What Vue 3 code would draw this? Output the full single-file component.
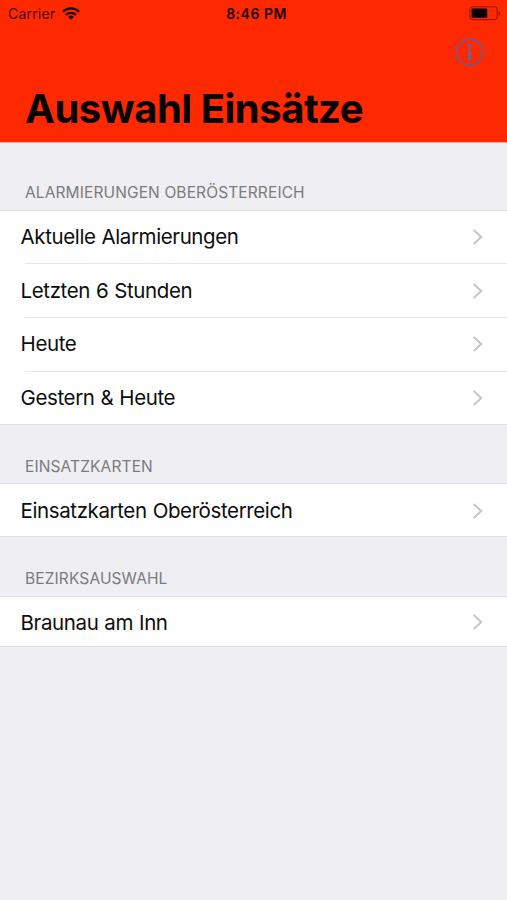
<script setup>
const sections = [
  {
    id: 'alarms',
    title: 'ALARMIERUNGEN OBERÖSTERREICH',
    rows: ['Aktuelle Alarmierungen', 'Letzten 6 Stunden', 'Heute', 'Gestern & Heute'],
  },
  { id: 'maps', title: 'EINSATZKARTEN', rows: ['Einsatzkarten Oberösterreich'] },
  { id: 'district', title: 'BEZIRKSAUSWAHL', rows: ['Braunau am Inn'] },
]
</script>

<template>
  <main class="screen">
    <header class="header">
      <div class="status">
        <div class="carrier">
          <span>Carrier</span>
          <svg class="wifi" width="18" height="13" viewBox="0 0 18 13">
            <g fill="none" stroke="#1c0300" stroke-width="2.3">
              <path d="M1 4.7a11.4 11.4 0 0 1 16 0" />
              <path d="M3.9 7.9a7.2 7.2 0 0 1 10.2 0" />
            </g>
            <path d="M6.2 9.9a4 4 0 0 1 5.6 0L9 12.8z" fill="#1c0300" />
          </svg>
        </div>
        <div class="time">8:46 PM</div>
        <svg class="battery" width="32" height="15" viewBox="0 0 32 15">
          <rect x="0.8" y="0.8" width="27.4" height="12.8" rx="2.6" fill="none" stroke="#8d1400" stroke-width="1" />
          <rect x="2.6" y="2.6" width="15.6" height="9.2" rx="0.8" fill="#090000" />
          <path d="M29.6 4.9c2 .7 2 3.9 0 4.6z" fill="#8d1400" />
        </svg>
      </div>
      <div class="toolbar">
        <button class="info" aria-label="Info">
          <svg width="30" height="30" viewBox="0 0 30 30">
            <circle cx="14.5" cy="15.2" r="13" fill="none" stroke="#7d5484" stroke-width="1.8" />
            <circle cx="14.5" cy="8.8" r="1.7" fill="#5b67ab" />
            <path d="M12.4 12.2h3.5v9.5h1v1.2h-4.6v-1.2h1v-8.2h-.9z" fill="#5b67ab" />
          </svg>
        </button>
      </div>
      <h1>Auswahl Einsätze</h1>
    </header>
    <section v-for="section in sections" :key="section.id" :class="section.id">
      <h2><span>{{ section.title }}</span></h2>
      <ul>
        <li v-for="row in section.rows" :key="row">
          <span>{{ row }}</span>
          <svg class="chevron" width="12" height="18" viewBox="0 0 12 18">
            <path d="M1.7 2.1 9.2 9l-7.5 6.9" fill="none" stroke="#c5c5ca" stroke-width="2" />
          </svg>
        </li>
      </ul>
    </section>
  </main>
</template>

<style>
body { background: #efeef3; }
</style>

<style scoped>
.screen {
  min-height: 900px;
  background: #efeef3;
  font-family: Inter, "Liberation Sans", sans-serif;
  color: #0d0d0e;
}
.header {
  box-sizing: border-box;
  height: 143px;
  background: #ff2900;
  border-bottom: 1px solid #f7aaa2;
}
.status {
  display: grid;
  grid-template-columns: 1fr auto 1fr;
  align-items: center;
  height: 27px;
  padding: 0 6px 0 8px;
  color: #1c0300;
}
.carrier { display: flex; align-items: center; gap: 7px; font-size: 14px; letter-spacing: 0.2px; color: #4a0b00; }
.wifi { margin-top: -1px; }
.time { padding-left: 4px; font-size: 14px; font-weight: 600; letter-spacing: 0.5px; }
.battery { justify-self: end; }
.toolbar { display: flex; justify-content: flex-end; height: 50px; padding: 10px 22px 0 0; box-sizing: border-box; }
.info { width: 30px; height: 30px; padding: 0; border: 0; background: none; }
.info svg { display: block; }
h1 {
  margin: 8px 0 0 25px;
  font-size: 40px;
  line-height: 48px;
  font-weight: 700;
  letter-spacing: -0.48px;
  color: #090000;
}
h2 {
  box-sizing: border-box;
  height: 67px;
  margin: 0;
  padding: 40px 0 0 25px;
  font-size: 15.5px;
  line-height: 20px;
  font-weight: 400;
  letter-spacing: 0.12px;
  color: #7b7b80;
}
.maps h2 { height: 58px; padding-top: 32px; }
.district h2 { height: 59px; padding-top: 32px; }
ul { margin: 0; padding: 0; list-style: none; background: #fff; border-top: 1px solid #e0dfe4; border-bottom: 1px solid #e0dfe4; }
li {
  display: flex;
  align-items: center;
  justify-content: space-between;
  box-sizing: border-box;
  height: 54px;
  padding: 0 23px 0 20.6px;
  font-size: 20.5px;
  line-height: 26px;
  letter-spacing: -0.39px;
  word-spacing: 0.6px;
}
li:first-child { height: 52px; }
li + li { padding-top: 1px; background: linear-gradient(#e7e7ea, #e7e7ea) 25px 0 / 100% 1px no-repeat; }
li:nth-child(n + 3) { height: 53.5px; }
.maps li:first-child { height: 52px; padding-top: 1px; }
.district li:first-child { height: 49px; }
.district li span { padding-top: 2px; }
.chevron { flex: none; }
</style>
